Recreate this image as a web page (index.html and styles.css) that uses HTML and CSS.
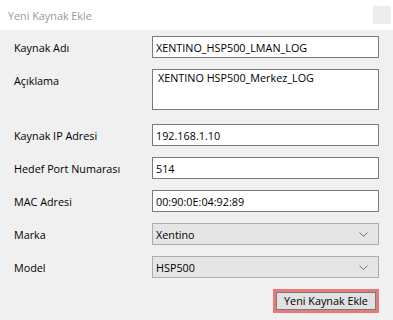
FILE: index.html
```html
<!DOCTYPE html>
<html lang="tr">
<head>
  <meta charset="UTF-8" />
  <meta name="viewport" content="width=device-width, initial-scale=1.0" />
  <title>Yeni Kaynak Ekle</title>
  <link rel="stylesheet" href="styles.css">
</head>
<body>
  <div class="window">
    <div class="title-bar">
      <span class="title">Yeni Kaynak Ekle</span>
      <span class="close-btn"></span>
    </div>

    <form class="form">
      <div class="row">
        <label class="label">Kaynak Adı</label>
        <input class="field" type="text" value="XENTINO_HSP500_LMAN_LOG" />
      </div>
      <div class="row row-top">
        <label class="label">Açıklama</label>
        <textarea class="field area">XENTINO HSP500_Merkez_LOG</textarea>
      </div>
      <div class="row">
        <label class="label">Kaynak IP Adresi</label>
        <input class="field" type="text" value="192.168.1.10" />
      </div>
      <div class="row">
        <label class="label">Hedef Port Numarası</label>
        <input class="field" type="text" value="514" />
      </div>
      <div class="row">
        <label class="label">MAC Adresi</label>
        <input class="field" type="text" value="00:90:0E:04:92:89" />
      </div>
      <div class="row">
        <label class="label">Marka</label>
        <div class="select">
          <span>Xentino</span>
          <svg class="chevron" width="9" height="5" viewBox="0 0 9 5"><path d="M0.5 0.5 L4.5 4.5 L8.5 0.5" fill="none" stroke="#6d6d6d" stroke-width="1"/></svg>
        </div>
      </div>
      <div class="row">
        <label class="label">Model</label>
        <div class="select">
          <span>HSP500</span>
          <svg class="chevron" width="9" height="5" viewBox="0 0 9 5"><path d="M0.5 0.5 L4.5 4.5 L8.5 0.5" fill="none" stroke="#6d6d6d" stroke-width="1"/></svg>
        </div>
      </div>
      <div class="actions">
        <button type="button" class="btn">Yeni Kaynak Ekle</button>
      </div>
    </form>
  </div>
</body>
</html>
```

FILE: styles.css
```css
body {
  margin: 0;
  padding: 0;
  background-color: #f0f0f0;
  font-family: 'Open Sans', 'Noto Sans', sans-serif;
  font-size: 10.8px;
  color: #000000;
}

.window {
  width: 393px;
  height: 320px;
  background-color: #f0f0f0;
}

.title-bar {
  height: 30px;
  background-color: #ffffff;
  display: flex;
  align-items: center;
  justify-content: space-between;
  padding: 0 2px 0 8px;
  box-sizing: border-box;
}

.title {
  color: #999999;
  font-size: 10.8px;
}

.close-btn {
  width: 18px;
  height: 18px;
  background-color: #ececec;
}

.form {
  display: flex;
  flex-direction: column;
  gap: 11px;
  padding: 6px 14px 0 14px;
}

.row {
  display: flex;
  align-items: center;
}

.row-top {
  align-items: flex-start;
  margin-bottom: 3px;
}

.row-top .label {
  padding-top: 4px;
}

.label {
  width: 138px;
  flex-shrink: 0;
}

.field {
  width: 227px;
  height: 22px;
  box-sizing: border-box;
  border: 1px solid #7a7a7a;
  background-color: #ffffff;
  font-family: inherit;
  font-size: 10.8px;
  color: #000000;
  padding: 0 3px;
  margin: 0;
  outline: none;
}

.area {
  height: 41px;
  resize: none;
  padding: 0 5px;
  line-height: 16px;
  overflow: hidden;
}

.select {
  width: 227px;
  height: 22px;
  box-sizing: border-box;
  border: 1px solid #adadad;
  background-color: #e5e5e5;
  display: flex;
  align-items: center;
  justify-content: space-between;
  padding: 0 10px 0 3px;
}

.actions {
  display: flex;
  justify-content: flex-end;
}

.btn {
  width: 100px;
  height: 18px;
  box-sizing: border-box;
  background-color: #e1e1e1;
  border: 1px solid #7a7a7a;
  box-shadow: 0 0 0 3px #e57b7b;
  font-family: inherit;
  font-size: 10.8px;
  line-height: 14px;
  color: #000000;
  padding: 0;
  margin: 3px 3px 0 0;
}
```
